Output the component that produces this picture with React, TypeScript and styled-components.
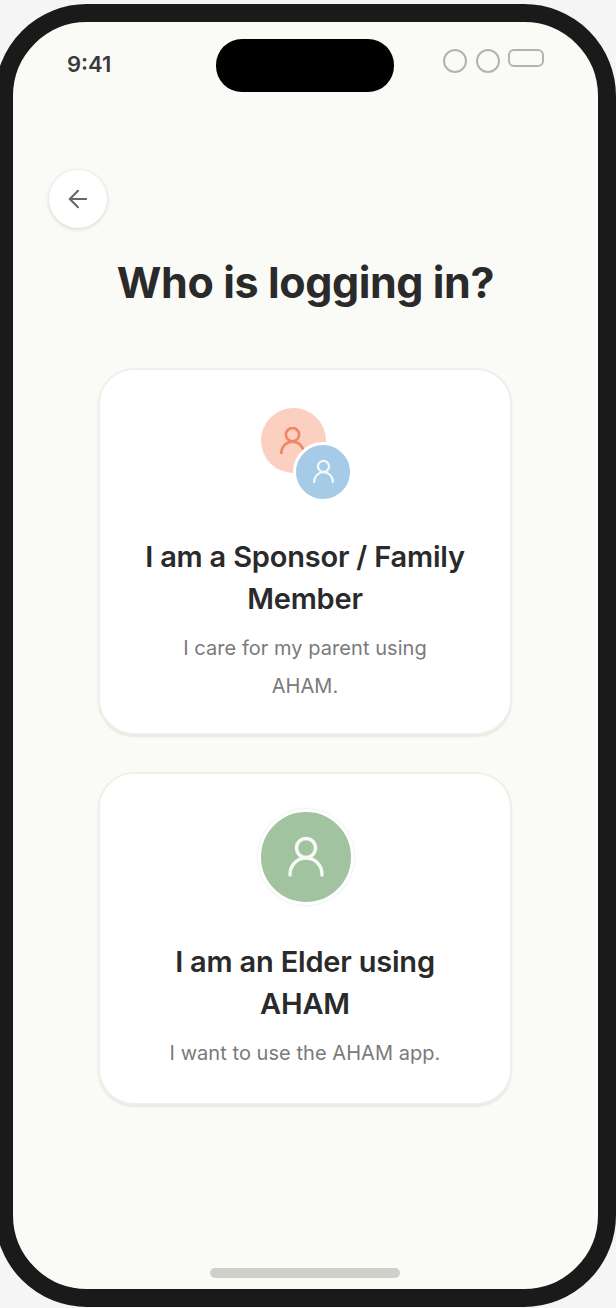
import React from "react";
import styled, { createGlobalStyle } from "styled-components";
import { ArrowLeft } from "lucide-react";

const Global = createGlobalStyle`
  html, body { margin: 0; padding: 0; background: #f5f5f5; overflow: hidden; }
  * { box-sizing: border-box; }
  body { font-family: Inter, "Liberation Sans", sans-serif; }
`;

const Page = styled.div`
  width: 616px;
  height: 1308px;
  overflow: hidden;
  padding-top: 4px;
`;

const Phone = styled.div`
  width: 621px;
  height: 1303px;
  margin-left: -5px;
  border: 18.5px solid #1a1a1a;
  border-radius: 92px;
  background: #fafaf6;
  display: flex;
  flex-direction: column;
  align-items: stretch;
  position: relative;
`;

const StatusBar = styled.div`
  display: flex;
  justify-content: space-between;
  align-items: flex-start;
  padding: 16px 54px 0 54px;
  height: 69px;
  position: relative;
`;

const Time = styled.span`
  font-size: 22px;
  font-weight: 600;
  line-height: 26px;
  color: #3a3a3a;
  margin-top: 13px;
`;

const Island = styled.div`
  position: absolute;
  left: 203px;
  top: 16.5px;
  width: 178px;
  height: 53px;
  border-radius: 26px;
  background: #000;
`;

const StatusIcons = styled.div`
  display: flex;
  gap: 8.5px;
  align-items: flex-start;
  margin-top: 10.5px;
`;

const RingIcon = styled.div`
  width: 24px;
  height: 24px;
  border-radius: 50%;
  border: 2px solid #b4b4af;
`;

const BatteryIcon = styled.div`
  width: 36px;
  height: 18px;
  border-radius: 6px;
  border: 2px solid #b4b4af;
`;

const BackButton = styled.button`
  width: 58px;
  height: 58px;
  margin: 79px 0 0 36px;
  padding: 0;
  border: none;
  border-radius: 50%;
  background: #fff;
  color: #666;
  display: flex;
  align-items: center;
  justify-content: center;
  box-shadow: 0 1px 4px rgba(0, 0, 0, 0.16);
`;

const Title = styled.h1`
  margin: 24px 0 0;
  text-align: center;
  font-size: 43px;
  line-height: 60px;
  font-weight: 700;
  letter-spacing: -0.4px;
  color: #2a2a2a;
`;

const CardList = styled.div`
  display: flex;
  flex-direction: column;
  gap: 37px;
  width: 414px;
  margin: 56px 0 0 85px;
`;

const Card = styled.div<{ $height: number }>`
  height: ${(p) => p.$height}px;
  padding: 38px 40px 0;
  background: #fff;
  border-radius: 36px;
  border: 2px solid #f0efe9;
  box-shadow: 0 2px 2px rgba(0, 0, 0, 0.08);
  display: flex;
  flex-direction: column;
  align-items: center;
  text-align: center;
`;

const AvatarPair = styled.div`
  position: relative;
  width: 90px;
  height: 91px;
  margin-left: 2px;
  flex: none;
`;

const Disc = styled.div<{ $size: number; $bg: string; $color: string }>`
  width: ${(p) => p.$size}px;
  height: ${(p) => p.$size}px;
  flex: none;
  border-radius: 50%;
  background: ${(p) => p.$bg};
  color: ${(p) => p.$color};
  display: flex;
  align-items: center;
  justify-content: center;
`;

const BackDisc = styled(Disc)`
  padding-right: 3px;
`;

const OverlapDisc = styled(Disc)`
  position: absolute;
  left: 32px;
  top: 34px;
  border: 3px solid #fff;
`;

const ElderDisc = styled(Disc)`
  border: 3px solid #fff;
  box-shadow: 0 0 3px rgba(0, 0, 0, 0.12);
  margin: -3px 0 -1px 2px;
`;

const CardTitle = styled.h2`
  margin: 37px 0 0;
  font-size: 29px;
  line-height: 42px;
  font-weight: 600;
  letter-spacing: -0.2px;
  color: #2a2a2a;
`;

const CardText = styled.p`
  margin: 9px 0 0;
  max-width: 300px;
  font-size: 20px;
  line-height: 38px;
  font-weight: 400;
  letter-spacing: 0.05px;
  color: #7a7a7a;
`;

const HomeBar = styled.div`
  position: absolute;
  left: 197px;
  bottom: 11px;
  width: 190px;
  height: 10px;
  border-radius: 5px;
  background: #d0cfca;
`;

const Person = ({ width, stroke }: { width: number; stroke: number }) => (
  <svg width={width} height={(width * 40) / 36} viewBox="0 0 36 40" fill="none" stroke="currentColor" strokeWidth={stroke} strokeLinecap="round">
    <circle cx="18" cy="11" r="9.5" />
    <path d="M2 38v-1a16 16 0 0 1 32 0v1" />
  </svg>
);

export default function App() {
  return (
    <Page>
      <Global />
      <Phone>
        <StatusBar>
          <Time>9:41</Time>
          <Island />
          <StatusIcons>
            <RingIcon />
            <RingIcon />
            <BatteryIcon />
          </StatusIcons>
        </StatusBar>
        <BackButton aria-label="Back">
          <ArrowLeft size={28} strokeWidth={1.8} />
        </BackButton>
        <Title>Who is logging in?</Title>
        <CardList>
          <Card $height={367}>
            <AvatarPair>
              <BackDisc $size={65} $bg="#fbd0c0" $color="#ee8762">
                <Person width={25} stroke={3.8} />
              </BackDisc>
              <OverlapDisc $size={60} $bg="#a5cbe6" $color="#f3f8fb">
                <Person width={21} stroke={3.8} />
              </OverlapDisc>
            </AvatarPair>
            <CardTitle>I am a Sponsor / Family Member</CardTitle>
            <CardText>I care for my parent using AHAM.</CardText>
          </Card>
          <Card $height={333}>
            <ElderDisc $size={96} $bg="#a2c39f" $color="#f7faf6">
              <Person width={36} stroke={3.4} />
            </ElderDisc>
            <CardTitle>I am an Elder using AHAM</CardTitle>
            <CardText>I want to use the AHAM app.</CardText>
          </Card>
        </CardList>
        <HomeBar />
      </Phone>
    </Page>
  );
}
